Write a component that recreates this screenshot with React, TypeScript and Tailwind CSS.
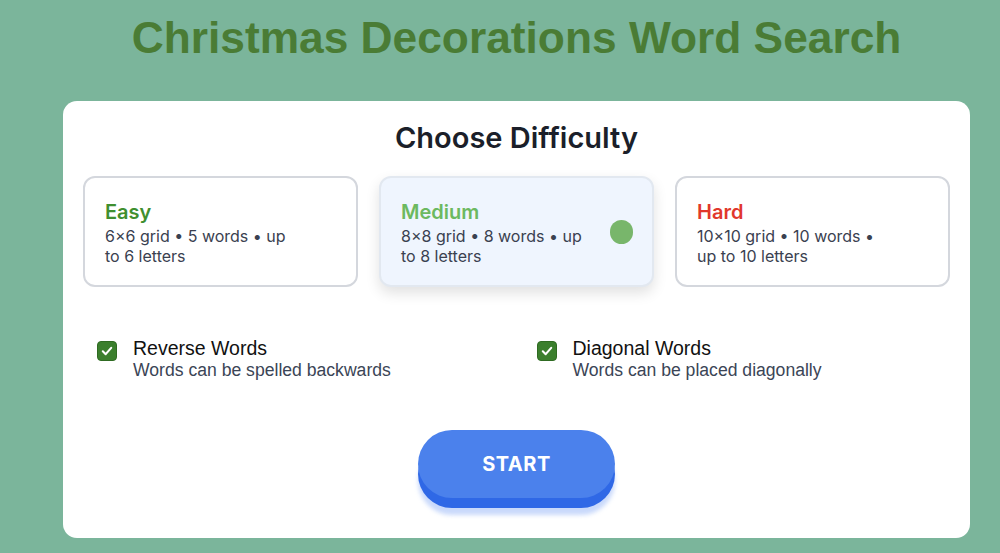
import { useState } from "react";

type Level = "easy" | "medium" | "hard";

const levels: { id: Level; name: string; desc: string; color: string }[] = [
  { id: "easy", name: "Easy", desc: "6×6 grid • 5 words • up to 6 letters", color: "text-[#3f8f30]" },
  { id: "medium", name: "Medium", desc: "8×8 grid • 8 words • up to 8 letters", color: "text-[#6cb960]" },
  { id: "hard", name: "Hard", desc: "10×10 grid • 10 words • up to 10 letters", color: "text-[#e1382c]" },
];

function CheckBox({ checked, onClick }: { checked: boolean; onClick: () => void }) {
  return (
    <button
      onClick={onClick}
      className={`mt-[5px] flex h-[20px] w-[20px] shrink-0 items-center justify-center rounded-[4px] border ${
        checked ? "border-[#2f6b22] bg-[#3b7f2d]" : "border-[#9ca3af] bg-white"
      }`}
    >
      {checked && (
        <svg viewBox="0 0 16 16" className="h-[14px] w-[14px]" fill="none">
          <path d="M3.2 8.4 L6.5 11.6 L12.8 4.4" stroke="white" strokeWidth="2.4" strokeLinecap="round" strokeLinejoin="round" />
        </svg>
      )}
    </button>
  );
}

function Option({ label, hint, checked, onClick }: { label: string; hint: string; checked: boolean; onClick: () => void }) {
  return (
    <div className="flex gap-4">
      <CheckBox checked={checked} onClick={onClick} />
      <div className="font-['Liberation_Sans',Arial,sans-serif]">
        <div className="text-[19.5px] leading-[24px] text-[#111]">{label}</div>
        <div className="text-[17.6px] leading-[20px] text-[#3b4556]">{hint}</div>
      </div>
    </div>
  );
}

export default function App() {
  const [level, setLevel] = useState<Level>("medium");
  const [reverse, setReverse] = useState(true);
  const [diagonal, setDiagonal] = useState(true);

  return (
    <div className="min-h-screen bg-[#7bb59b] pl-[63px] pr-[30px] font-['Inter',sans-serif]">
      <h1 className="pt-[13px] text-center font-['Liberation_Sans',Arial,sans-serif] text-[44.3px] font-bold leading-[50px] text-[#4a7c35]">
        Christmas Decorations Word Search
      </h1>

      <div className="mt-[38px] rounded-[14px] bg-white px-5 pt-[19px] pb-[40px]">
        <h2 className="text-center text-[29px] font-semibold leading-[36px] text-[#1b1f2a]">Choose Difficulty</h2>

        <div className="mt-5 grid grid-cols-3 gap-[21px]">
          {levels.map((l) => {
            const active = level === l.id;
            return (
              <button
                key={l.id}
                onClick={() => setLevel(l.id)}
                className={`flex h-[111px] items-center rounded-[12px] border-2 pl-[20px] pr-[19px] text-left ${
                  active
                    ? "border-[#e2e8f0] bg-[#eff5fe] shadow-[0_6px_14px_rgba(0,0,0,0.12)]"
                    : "border-[#d4d7dd] bg-white"
                }`}
              >
                <div className="w-[192px]">
                  <div className={`text-[20px] font-semibold leading-[28px] ${l.color}`}>{l.name}</div>
                  <div className="text-[16px] leading-[20px] text-[#3a4150]">{l.desc}</div>
                </div>
                <div className="ml-auto">
                  {active && <div className="h-[24px] w-[23px] rounded-full bg-[#78b66b]" />}
                </div>
              </button>
            );
          })}
        </div>

        <div className="mt-[49px] grid grid-cols-2 gap-[40px] px-[14px]">
          <Option label="Reverse Words" hint="Words can be spelled backwards" checked={reverse} onClick={() => setReverse(!reverse)} />
          <Option label="Diagonal Words" hint="Words can be placed diagonally" checked={diagonal} onClick={() => setDiagonal(!diagonal)} />
        </div>

        <div className="mt-[50px] flex justify-center">
          <button className="h-[68px] w-[197px] rounded-full bg-[#4b81ec] text-[20px] font-bold tracking-wide text-white shadow-[0_10px_0_#2f68e6,0_17px_4px_rgba(120,160,245,0.4)]">
            START
          </button>
        </div>
      </div>
    </div>
  );
}
